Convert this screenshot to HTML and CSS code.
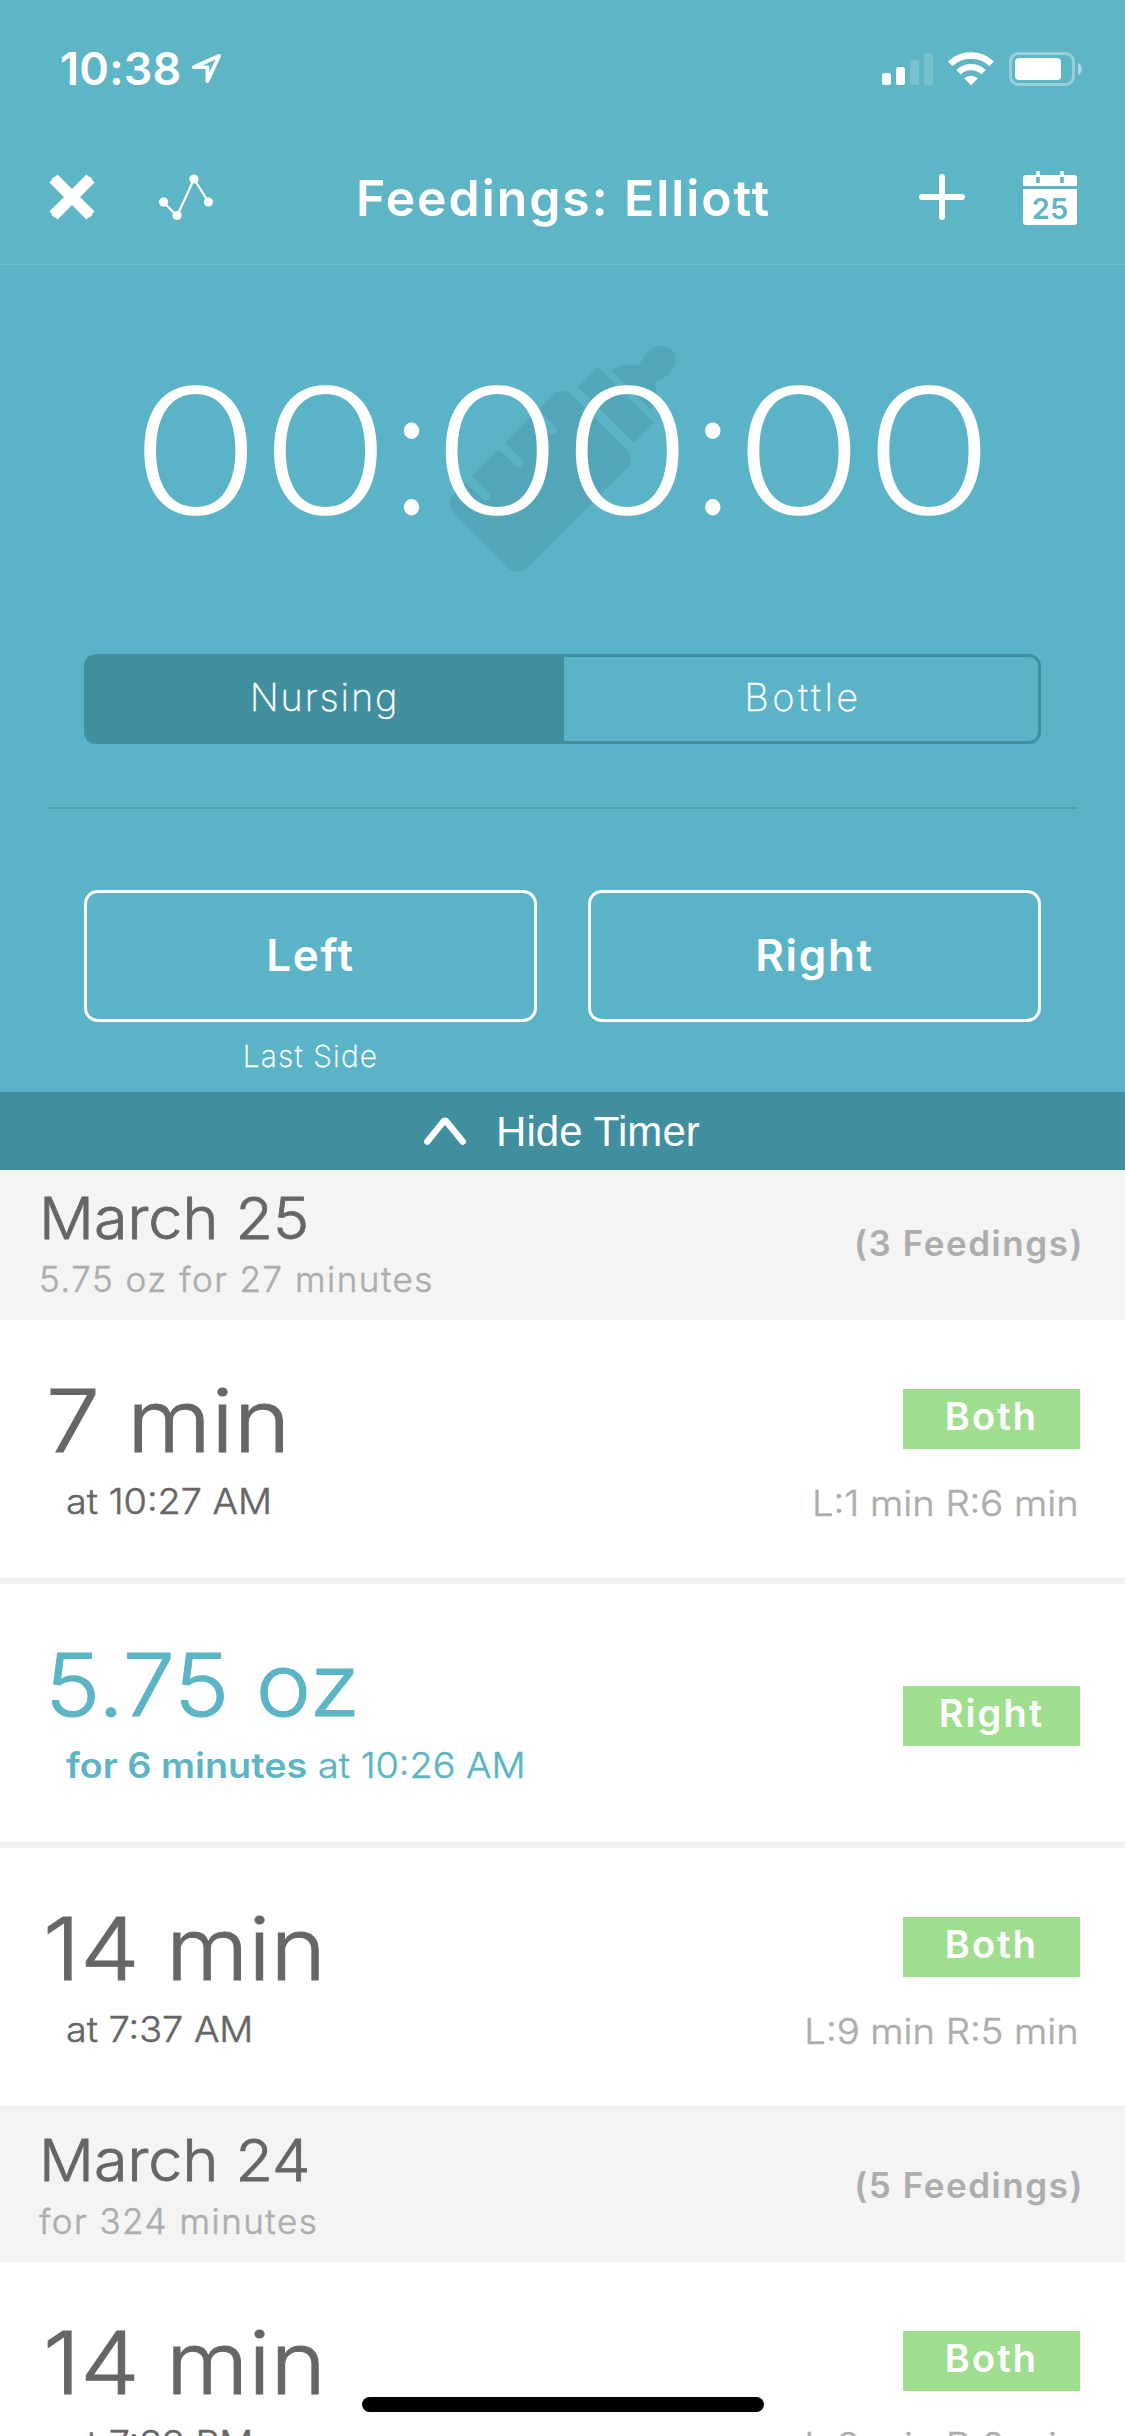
FILE: index.html
```html
<!DOCTYPE html>
<html lang="en">
<head>
<meta charset="utf-8">
<title>Feedings: Elliott</title>
<link rel="stylesheet" href="styles.css">
</head>
<body>
<div class="screen">
  <header class="top">
    <div class="status">
      <div class="status-left">
        <span class="clock">10:38</span>
        <svg class="location" width="33" height="33" viewBox="0 0 32 32" fill="none" stroke="#fff" stroke-width="3.6" stroke-linejoin="round"><path d="M28.3 3.7 3.7 14.8h13.2v13.5z"/></svg>
      </div>
      <div class="status-right">
        <svg width="52" height="34" viewBox="0 0 52 34" fill="#fff"><rect x="0" y="21" width="9" height="12" rx="2.5"/><rect x="14" y="15" width="9" height="18" rx="2.5"/><g opacity=".17"><rect x="28" y="8" width="9" height="25" rx="2.5"/><rect x="42" y="1" width="9" height="32" rx="2.5"/></g></svg>
        <svg class="wifi" width="46" height="34" viewBox="0 0 46 34" fill="none" stroke="#fff"><path d="M2.3 11.8a30 30 0 0 1 41.4 0" stroke-width="6.6"/><path d="M10.5 20.2a18 18 0 0 1 25 0" stroke-width="6.4"/><path d="M16.2 26.3a10 10 0 0 1 13.6 0L23 33.2z" fill="#fff" stroke="none"/></svg>
        <svg class="battery" width="74" height="34" viewBox="0 0 74 34"><rect x="1.5" y="1.5" width="63" height="31" rx="8" fill="none" stroke="#fff" stroke-width="3" opacity=".36"/><rect x="6" y="6" width="46" height="22" rx="4" fill="#fff"/><path d="M69 11c5 2 5 10 0 12z" fill="#fff" opacity=".5"/></svg>
      </div>
    </div>
    <nav class="nav">
      <div class="nav-side">
        <svg width="46" height="46" viewBox="0 0 46 46" stroke="#fff" stroke-width="11.5" stroke-linecap="butt"><path d="M4.5 4.5l37 37M41.500 4.500l-37 37"/><path d="M7 7l32 32M39 7L7 39" stroke-width="9" stroke-linecap="round"/></svg>
        <svg class="chart" width="54" height="47" viewBox="0 0 54 47" fill="#fff"><path d="M4.500 28l13.500 14L35 5l14.500 23" fill="none" stroke="#fff" stroke-width="2.2"/><circle cx="4.600" cy="28" r="4.600"/><circle cx="18" cy="41.500" r="4.600"/><circle cx="35" cy="5" r="4.600"/><circle cx="49.400" cy="28" r="4.600"/></svg>
      </div>
      <h1 class="title">Feedings: Elliott</h1>
      <div class="nav-side nav-right">
        <svg width="46" height="46" viewBox="0 0 46 46" stroke="#fff" stroke-width="6" stroke-linecap="round"><path d="M23 3v40M3 23h40"/></svg>
        <div class="calendar">
          <svg width="54" height="54" viewBox="0 0 54 54"><path d="M3 4h48a3 3 0 0 1 3 3v8H0V7a3 3 0 0 1 3-3zM0 18h54v33a3 3 0 0 1-3 3H3a3 3 0 0 1-3-3z" fill="#fff"/><path d="M15 0v6M39 0v6" stroke="#fff" stroke-width="3.500"/><path d="M15 6v6M39 6v6" stroke="#5eb5c5" stroke-width="3.500"/></svg>
          <span class="calendar-day">25</span>
        </div>
      </div>
    </nav>
  </header>

  <section class="timer">
    <div class="clockface">
      <svg class="bottle" width="232" height="234" viewBox="446 343 232 234" fill="#52a6b7"><rect x="456.700" y="429.250" width="167" height="104" rx="13" transform="rotate(-45 540.250 481.250)"/><path d="M468 479l18 17M501.500 445.500l17 17M535 413l17 17" stroke="#5ab3c6" stroke-width="9" stroke-linecap="round"/><path d="M464 475l8 8M498 442l7 7M531 409l7 7" stroke="#5ab3c6" stroke-width="9"/><path d="M598 367l-20 20 56 56 20-20z"/><path d="M611 370q11-8 27-4l9-13c7-8 18-10 25-3s3 20-5 26l-12 6q3 16-4 28z"/></svg>
      <div class="digits">00<span class="colon">:</span>00<span class="colon">:</span>00</div>
    </div>
    <div class="segment">
      <div class="segment-item active">Nursing</div>
      <div class="segment-item wide">Bottle</div>
    </div>
    <div class="rule"></div>
    <div class="sides">
      <div class="side-button">Left</div>
      <div class="side-button">Right</div>
      <div class="last-side">Last Side</div>
    </div>
  </section>

  <div class="hide-bar">
    <svg width="42" height="28" viewBox="0 0 42 28" fill="none" stroke="#fff" stroke-width="6.500" stroke-linecap="round" stroke-linejoin="round"><path d="M3.300 24.500L20 4h2l16.700 20.500"/></svg>
    <span class="hide-label">Hide Timer</span>
  </div>

  <main class="log">
    <div class="day">
      <div><div class="day-name">March 25</div><div class="day-sum">5.75 oz for 27 minutes</div></div>
      <div class="day-count">(3 Feedings)</div>
    </div>
    <div class="row">
      <div><div class="amount">7 min</div><div class="when">at 10:27 AM</div></div>
      <div class="right"><div class="badge">Both</div><div class="split">L:1 min R:6 min</div></div>
    </div>
    <div class="row bottle-row">
      <div><div class="amount">5.75 oz</div><div class="when"><b>for 6 minutes</b> at 10:26 AM</div></div>
      <div class="right single"><div class="badge">Right</div></div>
    </div>
    <div class="row">
      <div><div class="amount teens">14 min</div><div class="when">at 7:37 AM</div></div>
      <div class="right"><div class="badge">Both</div><div class="split">L:9 min R:5 min</div></div>
    </div>
    <div class="day">
      <div><div class="day-name">March 24</div><div class="day-sum">for 324 minutes</div></div>
      <div class="day-count">(5 Feedings)</div>
    </div>
    <div class="row">
      <div><div class="amount teens">14 min</div><div class="when">at 7:39 PM</div></div>
      <div class="right"><div class="badge">Both</div><div class="split">L:8 min R:6 min</div></div>
    </div>
  </main>
  <div class="home-indicator"></div>
</div>
</body>
</html>
```
FILE: styles.css
```css
* { box-sizing: border-box; }
body { margin: 0; font-family: Inter, "Liberation Sans", sans-serif; background: #fff; }
svg { display: block; flex: none; }
.screen { position: relative; width: 1125px; height: 2436px; overflow: hidden; }

.top { height: 265px; background: #5eb5c5; border-bottom: 1px solid #6bbdcc; color: #fff; }
.status { height: 132px; padding: 52px 42px 0 60px; display: flex; justify-content: space-between; align-items: flex-start; }
.status-left, .status-right { display: flex; }
.clock { font-size: 45px; line-height: 34px; font-weight: 600; width: 130px; letter-spacing: 0.005em; }
.wifi { margin-left: 14px; }
.battery { margin-left: 15px; }

.nav { height: 132px; padding: 39px 48px 0 49px; display: flex; justify-content: space-between; align-items: flex-start; }
.nav-side { display: flex; width: 159px; padding-top: 3px; }
.chart { margin-left: 59px; margin-left: 64px; margin-right: -5px; }
.nav-right { padding-top: 0; width: 158px; }
.nav-right > svg { margin-top: 3px; }
.calendar { position: relative; margin-left: 58px; }
.calendar-day { position: absolute; left: 0; width: 54px; top: 22px; text-align: center; font-size: 29px; line-height: 32px; font-weight: 600; color: #5eb5c5; }
.title { margin: 0; font-size: 50px; line-height: 54px; font-weight: 600; letter-spacing: 0.038em; white-space: nowrap; }

.timer { height: 827px; background: #5ab3c6; color: #fff; padding-top: 78px; }
.clockface { height: 311px; display: grid; justify-items: center; }
.clockface > * { grid-area: 1 / 1; }
.bottle { margin-left: -1px; }
.digits { padding-top: 3px; font-size: 172px; line-height: 208px; font-weight: 200; -webkit-text-stroke: 1.6px #fff; white-space: nowrap; transform: scaleX(1.25); z-index: 1; height: 210px; }
.colon { display: inline-block; margin: 0 -7px; transform: scaleX(0.75); -webkit-text-stroke-width: 3px; }
.segment { margin: 0 84px; height: 90px; border: 3px solid #408e9e; border-radius: 12px; display: grid; grid-template-columns: 477px 1fr; font-size: 38px; line-height: 81px; font-weight: 200; letter-spacing: 0.048em; text-align: center; -webkit-text-stroke: 0.3px #fff; }
.active { background: #408e9e; padding-right: 2px; }
.wide { letter-spacing: 0.09em; padding-left: 4px; }
.rule { margin: 63px 48px 0; height: 2px; background: #4f9fb0; }
.sides { margin: 81px 84px 0; display: grid; grid-template-columns: 453px 453px; justify-content: space-between; text-align: center; }
.side-button { height: 132px; border: 3px solid #fff; border-radius: 14px; font-size: 44px; line-height: 125px; font-weight: 600; letter-spacing: 0.038em; }
.last-side { font-size: 30px; line-height: 69px; font-weight: 200; letter-spacing: 0.038em; -webkit-text-stroke: 0.3px #fff; }

.hide-bar { height: 78px; background: #408e9e; color: #fff; display: flex; align-items: center; padding-left: 424px; gap: 30px; }
.hide-label { font-family: "Liberation Sans", Arial, sans-serif; font-size: 42px; line-height: 76px; padding-top: 2px; letter-spacing: 0.002em; }

.day { height: 150px; background: #f4f4f4; padding: 16px 45px 0 39px; display: flex; justify-content: space-between; white-space: nowrap; }
.day-name { font-size: 58px; line-height: 64px; font-weight: 300; color: #666; -webkit-text-stroke: 0.8px #666; transform: scaleX(1.052); transform-origin: left; }
.day-sum { font-size: 35px; line-height: 59px; font-weight: 300; color: #adadad; letter-spacing: 0.043em; -webkit-text-stroke: 0.5px #adadad; }
.day-count { font-size: 35px; line-height: 115px; font-weight: 600; color: #adadad; letter-spacing: 0.044em; margin-right: -4px; }
.row { height: 264px; border-bottom: 6px solid #f2f2f2; background: #fff; padding: 50px 45px 0 47px; display: flex; justify-content: space-between; color: #666; white-space: nowrap; }
.row:nth-child(4) { border-bottom-color: #f2f2f2; }
.amount { font-size: 87px; line-height: 101px; font-weight: 300; margin-left: -1px; -webkit-text-stroke: 1px currentColor; transform: scaleX(1.108); transform-origin: left; }
.bottle-row .amount { margin-left: -2px; transform: scaleX(1.072); }
.teens { margin-left: -4px; transform: scaleX(1.085); }
.when { margin-left: 19px; font-size: 35px; line-height: 61px; font-weight: 300; -webkit-text-stroke: 0.5px currentColor; transform: scaleX(1.08); transform-origin: left; }
.when b { font-weight: 600; -webkit-text-stroke-width: 0; }
.bottle-row { color: #5cb5c5; }
.right { padding-top: 19px; display: flex; flex-direction: column; align-items: flex-end; }
.single { padding-top: 52px; }
.badge { width: 177px; height: 60px; background: #9fde8e; color: #fff; text-align: center; font-size: 38px; line-height: 54px; font-weight: 600; letter-spacing: 0.055em; }
.split { margin: 24px 1px 0 0; font-size: 35px; line-height: 61px; font-weight: 300; color: #adadad; -webkit-text-stroke: 0.5px #adadad; transform: scaleX(1.09); transform-origin: right; }
.home-indicator { position: absolute; left: 362px; top: 2397px; width: 402px; height: 15px; border-radius: 8px; background: #000; }
```
